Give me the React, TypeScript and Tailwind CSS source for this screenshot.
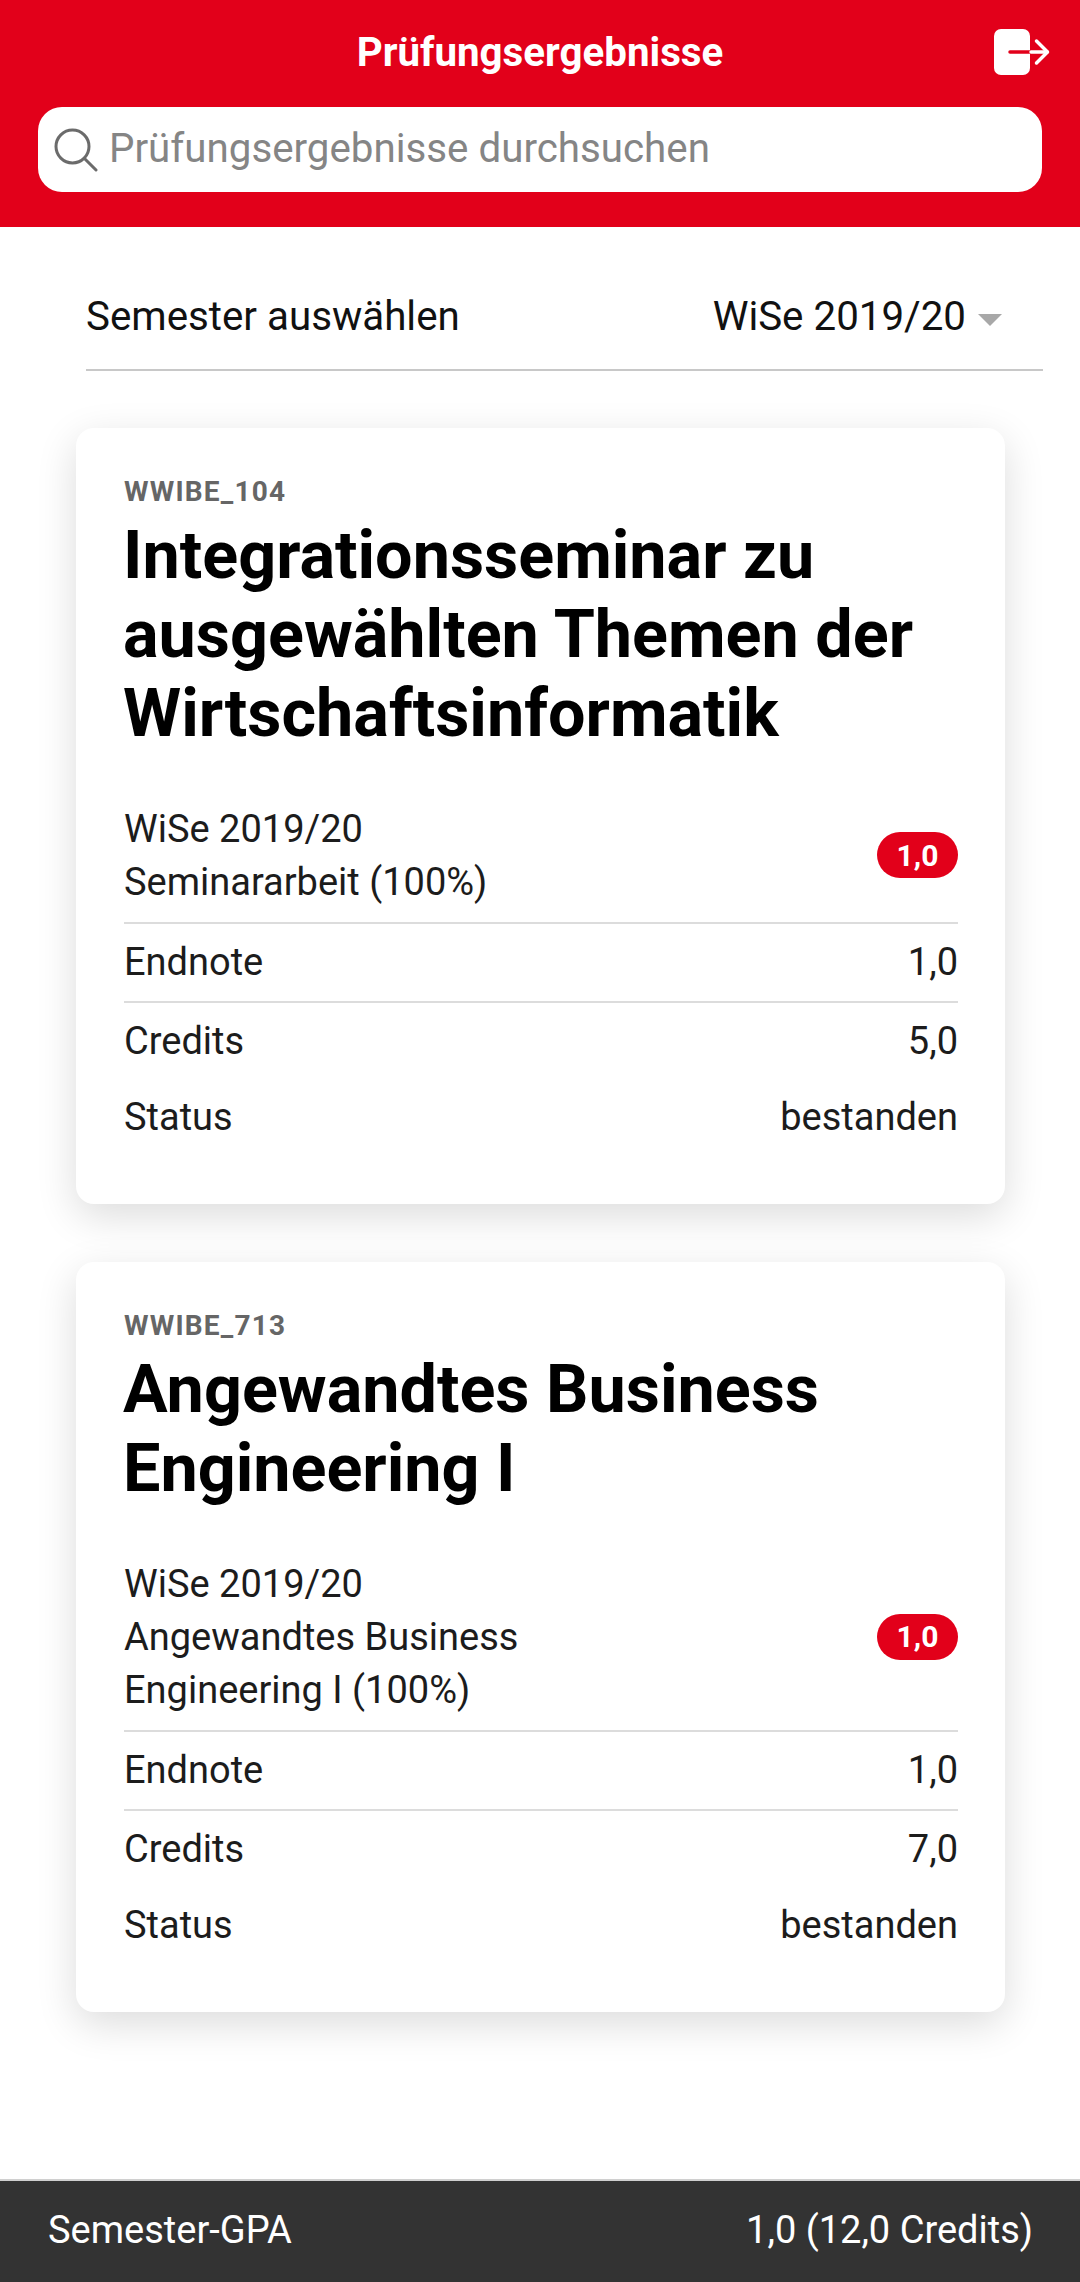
function LogoutIcon() {
  return (
    <svg width="56" height="46" viewBox="0 0 56 46" fill="none">
      <rect x="0" y="0" width="36" height="46" rx="7" fill="#fff" />
      <path d="M16 23H37" stroke="#E2001A" strokeWidth="3.5" strokeLinecap="round" />
      <path d="M37 23H53" stroke="#fff" strokeWidth="3.5" strokeLinecap="round" />
      <path d="M42.5 12L53.5 23L42.5 34" stroke="#fff" strokeWidth="3.5" strokeLinecap="round" strokeLinejoin="round" />
    </svg>
  );
}

function SearchIcon() {
  return (
    <svg width="44" height="44" viewBox="0 0 44 44" fill="none" stroke="#6b6b6b" strokeWidth="3" strokeLinecap="round">
      <circle cx="18.5" cy="18.5" r="16.5" />
      <path d="M30.5 30.5L42 42" />
    </svg>
  );
}

function Row({ label, value, border }: { label: string; value: string; border?: boolean }) {
  return (
    <div className={`flex h-[79px] items-center justify-between ${border ? 'border-t-2 border-[#dcdcdc]' : ''}`}>
      <span>{label}</span>
      <span>{value}</span>
    </div>
  );
}

interface ResultCardProps {
  code: string;
  title: string[];
  exam: string[];
  credits: string;
}

function ResultCard({ code, title, exam, credits }: ResultCardProps) {
  return (
    <div className="rounded-[18px] bg-white pl-[48px] pr-[47px] pt-[49px] pb-[47px] shadow-[0_12px_40px_rgba(0,0,0,0.14)]">
      <p className="text-[28px] font-bold leading-[30px] tracking-[1.2px] text-[#666]">{code}</p>
      <h2 className="mt-[9px] -ml-[1px] text-[66.5px] font-bold leading-[79px] text-black">
        {title.map((line) => (
          <span key={line} className="block">{line}</span>
        ))}
      </h2>
      <div className="mt-[49px] text-[38px] leading-[53px] text-[#1c1c1c]">
        <div className="flex items-center justify-between pb-[14px]">
          <div className="relative top-[1px]">
            {exam.map((line) => (
              <div key={line}>{line}</div>
            ))}
          </div>
          <span className="flex h-[46px] w-[81px] items-center justify-center rounded-full bg-[#E2001A] text-[30px] font-bold text-white">1,0</span>
        </div>
        <Row label="Endnote" value="1,0" border />
        <Row label="Credits" value={credits} border />
        <div className="-mt-[2px]">
          <Row label="Status" value="bestanden" />
        </div>
      </div>
    </div>
  );
}

export default function App() {
  return (
    <div className="flex h-[2282px] w-[1080px] flex-col bg-white font-['Roboto',sans-serif]">
      <header className="h-[227px] bg-[#E2001A] px-[38px]">
        <div className="relative flex h-[107px] items-center justify-center">
          <h1 className="text-[40.3px] font-bold text-white">Prüfungsergebnisse</h1>
          <div className="absolute right-[-8px] top-[29px] flex">
            <LogoutIcon />
          </div>
        </div>
        <div className="flex h-[85px] items-center gap-[11px] rounded-[24px] bg-white pl-[16px]">
          <SearchIcon />
          <span className="text-[40.3px] text-[#858585]">Prüfungsergebnisse durchsuchen</span>
        </div>
      </header>

      <main className="flex-1">
        <div className="ml-[86px] mr-[37px] flex h-[144px] items-center justify-between border-b-2 border-[#c8c8c8] pt-[39px] text-[40.3px] text-[#111]">
          <span>Semester auswählen</span>
          <span className="flex items-center gap-[12px] pr-[41px]">
            WiSe 2019/20
            <span className="mt-[4px] h-0 w-0 border-x-[12px] border-t-[12px] border-x-transparent border-t-[#a8a8a8]" />
          </span>
        </div>
        <div className="mt-[57px] flex flex-col gap-[58px] pl-[76px] pr-[75px]">
          <ResultCard
            code="WWIBE_104"
            title={['Integrationsseminar zu', 'ausgewählten Themen der', 'Wirtschaftsinformatik']}
            exam={['WiSe 2019/20', 'Seminararbeit (100%)']}
            credits="5,0"
          />
          <ResultCard
            code="WWIBE_713"
            title={['Angewandtes Business', 'Engineering I']}
            exam={['WiSe 2019/20', 'Angewandtes Business', 'Engineering I (100%)']}
            credits="7,0"
          />
        </div>
      </main>

      <footer className="flex h-[103px] items-center justify-between border-t-2 border-[#d0d0d0] bg-[#333] pb-[2px] pl-[48px] pr-[47px] text-[38px] text-white">
        <span>Semester-GPA</span>
        <span>1,0 (12,0 Credits)</span>
      </footer>
    </div>
  );
}
